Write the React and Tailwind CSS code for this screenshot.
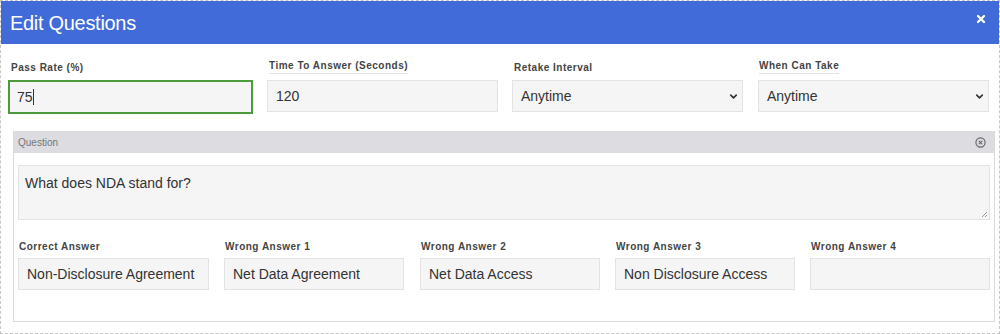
import { X, ChevronDown, CircleX } from "lucide-react";

const font = { fontFamily: '"Liberation Sans", Arial, sans-serif' };

function Label({ children, className = "" }) {
  return (
    <div className={`text-[10px] font-bold tracking-[0.5px] text-[#444] ${className}`}>{children}</div>
  );
}

function Field({ value, className = "" }) {
  return (
    <div className={`h-[32px] bg-[#f5f5f5] border border-[#e3e3e3] flex items-center px-[8px] text-[14px] text-[#333] ${className}`}>
      {value}
    </div>
  );
}

function Select({ value, className = "" }) {
  return (
    <div className={`h-[32px] bg-[#f5f5f5] border border-[#e3e3e3] flex items-center justify-between pl-[8px] pr-[3px] text-[14px] text-[#333] ${className}`}>
      <span>{value}</span>
      <ChevronDown size={11} strokeWidth={3.5} className="text-[#333]" />
    </div>
  );
}

const answers = [
  { label: "Correct Answer", value: "Non-Disclosure Agreement", w: "w-[191px]", ml: "" },
  { label: "Wrong Answer 1", value: "Net Data Agreement", w: "w-[180px]", ml: "ml-[15px]" },
  { label: "Wrong Answer 2", value: "Net Data Access", w: "w-[180px]", ml: "ml-[16px]" },
  { label: "Wrong Answer 3", value: "Non Disclosure Access", w: "w-[180px]", ml: "ml-[15px]" },
  { label: "Wrong Answer 4", value: "", w: "w-[180px]", ml: "ml-[15px]" },
];

export default function App() {
  return (
    <div style={font} className="w-[1000px] h-[334px] bg-white border border-dashed border-[#c8c8c8] overflow-hidden">
      <div className="h-[43px] bg-[#416bd9] flex items-center justify-between pl-[9px] pr-[12px]">
        <h1 className="text-[20px] tracking-[-0.3px] text-white">Edit Questions</h1>
        <X size={12} strokeWidth={4.5} className="text-white -mt-[8px]" />
      </div>

      <div className="flex pl-[7px] pt-[14px]">
        <div className="w-[245px]">
          <Label className="pl-[3px] mt-[2px] h-[19px]">Pass Rate (%)</Label>
          <div className="mt-[1px] h-[34px] bg-[#f5f5f5] border-2 border-[#4c9a3c] flex items-center px-[7px] text-[14px] text-[#333]">
            75<span className="w-px h-[16px] bg-[#333]" />
          </div>
        </div>
        <div className="w-[231px] ml-[14px]">
          <Label className="pl-[2px] h-[22px]">
            <span className="border-b border-[#dfe3f0] pb-[2px]">Time To Answer (Seconds)</span>
          </Label>
          <Field value="120" />
        </div>
        <div className="w-[231px] ml-[14px]">
          <Label className="pl-[2px] mt-[2px] h-[20px]">Retake Interval</Label>
          <Select value="Anytime" />
        </div>
        <div className="w-[231px] ml-[15px]">
          <Label className="pl-[1px] h-[22px]">
            <span className="border-b border-[#dfe3f0] pb-[2px]">When Can Take</span>
          </Label>
          <Select value="Anytime" />
        </div>
      </div>

      <div className="ml-[12px] mr-[4px] mt-[17px] h-[191px] border border-[#dadada]">
        <div className="h-[21px] bg-[#dcdce1] flex items-center justify-between pl-[4px] pr-[8px]">
          <span className="text-[10px] text-[#777]">Question</span>
          <CircleX size={11} strokeWidth={2.5} className="text-[#666]" />
        </div>
        <div className="px-[4px] pt-[12px]">
          <div className="relative h-[55px] bg-[#f5f5f5] border border-[#e3e3e3] px-[6px] pt-[7px] text-[14px] text-[#333]">
            What does NDA stand for?
            <svg className="absolute right-[1px] bottom-[1px]" width="7" height="7" viewBox="0 0 7 7">
              <path d="M6 1 L1 6 M6 4 L4 6" stroke="#999" strokeWidth="1" />
            </svg>
          </div>
          <div className="flex mt-[19px]">
            {answers.map((a) => (
              <div key={a.label} className={`${a.w} ${a.ml} shrink-0`}>
                <Label className="h-[19px] pl-[1px]">{a.label}</Label>
                <Field value={a.value} className="h-[31px] px-[5px] text-[13.5px]" />
              </div>
            ))}
          </div>
        </div>
      </div>
    </div>
  );
}
